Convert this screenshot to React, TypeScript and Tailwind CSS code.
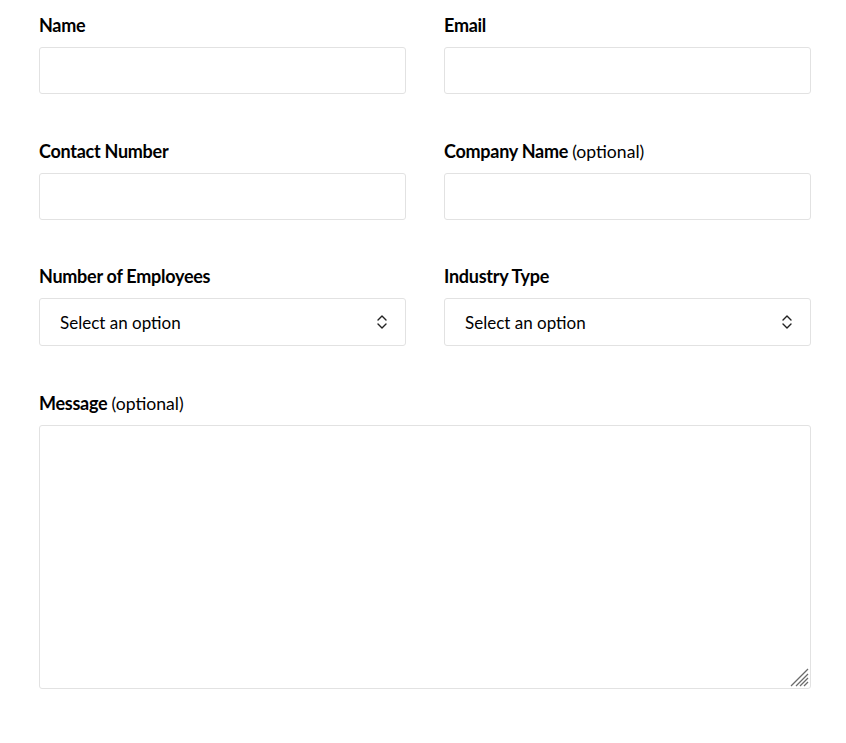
import type { ReactNode } from "react";

function Label({ children, optional }: { children: ReactNode; optional?: boolean }) {
  return (
    <label className="mb-2 block text-[18px] leading-[27px] text-black">
      <span className="font-bold tracking-[-0.015em]">
        {children}
        {optional && " "}
      </span>
      {optional && <span className="font-normal text-[17.6px]">(optional)</span>}
    </label>
  );
}

function TextInput() {
  return (
    <input
      type="text"
      className="block h-[47px] w-full rounded-[3px] border border-[#e2e2e2] bg-white px-5 text-[17px] outline-none"
    />
  );
}

function SelectBox() {
  return (
    <div className="relative">
      <select
        defaultValue=""
        className="block h-[48px] w-full appearance-none rounded-[3px] border border-[#e2e2e2] bg-white pl-5 pr-10 pt-px text-[17px] text-black outline-none"
      >
        <option value="">Select an option</option>
      </select>
      <svg
        className="pointer-events-none absolute right-[18px] top-1/2 -translate-y-1/2"
        width="12"
        height="16"
        viewBox="0 0 12 16"
        fill="none"
        stroke="#222"
        strokeWidth="1.4"
        strokeLinecap="round"
        strokeLinejoin="round"
      >
        <path d="M2 6 L6 2 L10 6" />
        <path d="M2 10 L6 14 L10 10" />
      </svg>
    </div>
  );
}

export default function App() {
  return (
    <div className="min-h-screen bg-white font-['Lato',sans-serif]">
      <form className="w-[772px] ml-[39px] pt-3">
        <div className="grid grid-cols-2 gap-x-[38px] gap-y-[44px]">
          <div>
            <Label>Name</Label>
            <TextInput />
          </div>
          <div>
            <Label>Email</Label>
            <TextInput />
          </div>
          <div>
            <Label>Contact Number</Label>
            <TextInput />
          </div>
          <div>
            <Label optional>Company Name</Label>
            <TextInput />
          </div>
          <div className="-mt-px">
            <Label>Number of Employees</Label>
            <SelectBox />
          </div>
          <div className="-mt-px">
            <Label>Industry Type</Label>
            <SelectBox />
          </div>
          <div className="col-span-2">
            <Label optional>Message</Label>
            <div className="relative">
              <textarea className="block h-[264px] w-full resize-none rounded-[3px] border border-[#e2e2e2] bg-white px-5 py-3 text-[17px] outline-none" />
              <svg
                className="pointer-events-none absolute bottom-[2px] right-[2px]"
                width="19"
                height="19"
                viewBox="0 0 19 19"
                stroke="#6b6b6b"
                strokeWidth="1.3"
              >
                <path d="M1 18 L18 1" />
                <path d="M6 18 L18 6" />
                <path d="M10 18 L18 10" />
                <path d="M14 18 L18 14" />
              </svg>
            </div>
          </div>
        </div>
      </form>
    </div>
  );
}
